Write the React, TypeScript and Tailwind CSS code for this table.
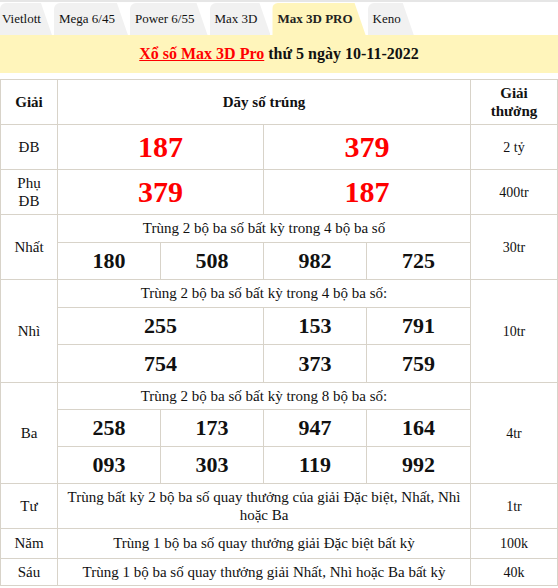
import React from "react";

const tabs = ["Vietlott", "Mega 6/45", "Power 6/55", "Max 3D", "Max 3D PRO", "Keno"];

const cell = "border border-[#d8d3c9] text-center align-middle";

function Num({ v, span = 1 }: { v: string; span?: number }) {
  return (
    <td colSpan={span} className={`${cell} text-[22px] font-bold leading-none`}>
      {v}
    </td>
  );
}

function Note({ text }: { text: string }) {
  return (
    <td colSpan={4} className={`${cell} text-[15px] leading-tight`}>
      {text}
    </td>
  );
}

export default function App() {
  return (
    <div className="w-[558px] h-[588px] bg-white font-['Liberation_Serif',serif] text-[#111] overflow-hidden">
      {/* Tabs */}
      <div className="border-t-2 border-[#e6e6e6] flex items-end gap-[2px] pt-[1px]">
        {tabs.map((t, i) => {
          const active = t === "Max 3D PRO";
          return (
            <div
              key={t}
              className={`h-[32px] flex items-center rounded-tl-[6px] rounded-tr-[4px] text-[13px] [clip-path:polygon(0_0,calc(100%-11px)_0,100%_100%,0_100%)] ${
                i === 0 ? "pl-[2px] pr-[11px]" : "pl-[5px] pr-[13px]"
              } ${active ? "bg-[#fff5bb] font-bold text-[#222]" : "bg-[#f1f1f1]"}`}
            >
              {t}
            </div>
          );
        })}
      </div>

      {/* Title band */}
      <div className="h-[38px] bg-[#fff5bb] flex items-center justify-center text-[16px] font-bold">
        <span className="text-[#ff0000] underline">Xổ số Max 3D Pro</span>
        <span>&nbsp;thứ 5 ngày 10-11-2022</span>
      </div>

      {/* Results table */}
      <table className="mt-[6px] w-[557px] table-fixed">
        <colgroup>
          <col className="w-[57px]" />
          <col className="w-[103px]" />
          <col className="w-[103px]" />
          <col className="w-[103px]" />
          <col className="w-[104px]" />
          <col className="w-[87px]" />
        </colgroup>
        <tbody>
          <tr className="h-[45px] font-bold text-[15px]">
            <td className={cell}>Giải</td>
            <td colSpan={4} className={cell}>Dãy số trúng</td>
            <td className={`${cell} leading-[18px]`}>
              Giải
              <br />
              thưởng
            </td>
          </tr>

          <tr className="h-[45px]">
            <td className={`${cell} text-[15px]`}>ĐB</td>
            <td colSpan={2} className={`${cell} text-[30px] font-bold text-[#ff0000] leading-none`}>187</td>
            <td colSpan={2} className={`${cell} text-[30px] font-bold text-[#ff0000] leading-none`}>379</td>
            <td className={`${cell} text-[14px]`}>2 tỷ</td>
          </tr>

          <tr className="h-[45px]">
            <td className={`${cell} text-[15px] leading-[18px]`}>
              Phụ
              <br />
              ĐB
            </td>
            <td colSpan={2} className={`${cell} text-[30px] font-bold text-[#ff0000] leading-none`}>379</td>
            <td colSpan={2} className={`${cell} text-[30px] font-bold text-[#ff0000] leading-none`}>187</td>
            <td className={`${cell} text-[14px]`}>400tr</td>
          </tr>

          {/* Nhất */}
          <tr className="h-[28px]">
            <td rowSpan={2} className={`${cell} text-[15px]`}>Nhất</td>
            <Note text="Trùng 2 bộ ba số bất kỳ trong 4 bộ ba số" />
            <td rowSpan={2} className={`${cell} text-[14px]`}>30tr</td>
          </tr>
          <tr className="h-[37px]">
            <Num v="180" />
            <Num v="508" />
            <Num v="982" />
            <Num v="725" />
          </tr>

          {/* Nhì */}
          <tr className="h-[28px]">
            <td rowSpan={3} className={`${cell} text-[15px]`}>Nhì</td>
            <Note text="Trùng 2 bộ ba số bất kỳ trong 4 bộ ba số:" />
            <td rowSpan={3} className={`${cell} text-[14px]`}>10tr</td>
          </tr>
          <tr className="h-[37px]">
            <Num v="255" span={2} />
            <Num v="153" />
            <Num v="791" />
          </tr>
          <tr className="h-[38px]">
            <Num v="754" span={2} />
            <Num v="373" />
            <Num v="759" />
          </tr>

          {/* Ba */}
          <tr className="h-[27px]">
            <td rowSpan={3} className={`${cell} text-[15px]`}>Ba</td>
            <Note text="Trùng 2 bộ ba số bất kỳ trong 8 bộ ba số:" />
            <td rowSpan={3} className={`${cell} text-[14px]`}>4tr</td>
          </tr>
          <tr className="h-[37px]">
            <Num v="258" />
            <Num v="173" />
            <Num v="947" />
            <Num v="164" />
          </tr>
          <tr className="h-[37px]">
            <Num v="093" />
            <Num v="303" />
            <Num v="119" />
            <Num v="992" />
          </tr>

          <tr className="h-[45px]">
            <td className={`${cell} text-[15px]`}>Tư</td>
            <td colSpan={4} className={`${cell} text-[15px] leading-[18px] px-[8px]`}>
              Trùng bất kỳ 2 bộ ba số quay thưởng của giải Đặc biệt, Nhất, Nhì hoặc Ba
            </td>
            <td className={`${cell} text-[14px]`}>1tr</td>
          </tr>

          <tr className="h-[30px]">
            <td className={`${cell} text-[15px]`}>Năm</td>
            <Note text="Trùng 1 bộ ba số quay thưởng giải Đặc biệt bất kỳ" />
            <td className={`${cell} text-[14px]`}>100k</td>
          </tr>

          <tr className="h-[27px]">
            <td className={`${cell} text-[15px]`}>Sáu</td>
            <Note text="Trùng 1 bộ ba số quay thưởng giải Nhất, Nhì hoặc Ba bất kỳ" />
            <td className={`${cell} text-[14px]`}>40k</td>
          </tr>
        </tbody>
      </table>
    </div>
  );
}
